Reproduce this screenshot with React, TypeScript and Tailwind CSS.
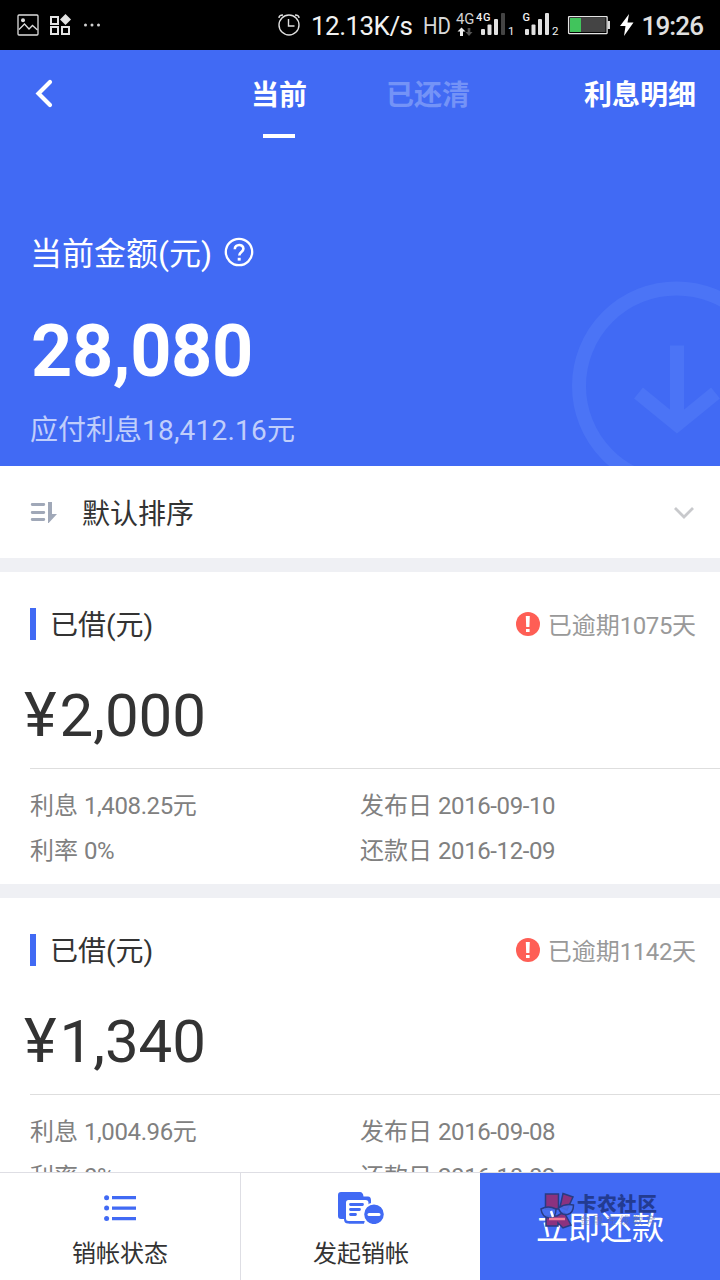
type Loan = {
  amount: string;
  interest: string;
  rate: string;
  published: string;
  due: string;
  overdue: number;
};

const LOANS: Loan[] = [
  { amount: "2,000", interest: "1,408.25", rate: "0%", published: "2016-09-10", due: "2016-12-09", overdue: 1075 },
  { amount: "1,340", interest: "1,004.96", rate: "0%", published: "2016-09-08", due: "2016-10-03", overdue: 1142 },
];

function StatusBar() {
  return (
    <div className="h-[50px] shrink-0 bg-black">
      <svg width="720" height="50" viewBox="0 0 720 50" fill="none">
        {/* gallery */}
        <g stroke="#dedede" strokeWidth="1.3">
          <rect x="18" y="15" width="20" height="20" rx="1" />
          <path d="M19 29.5l5.5-5.5 4.5 5 3.5-3.5 5 4.5" />
        </g>
        <circle cx="23" cy="20.2" r="2" fill="#dedede" />
        {/* apps */}
        <g stroke="#e4e4e4" strokeWidth="2">
          <rect x="51" y="17" width="7" height="7" />
          <rect x="51" y="27" width="7" height="7" />
          <rect x="62" y="27" width="7" height="7" />
        </g>
        <path d="M65.5 14l5.5 5.5-5.5 5.5-5.5-5.5z" fill="#e4e4e4" />
        <g fill="#d0d0d0">
          <circle cx="85.5" cy="25" r="1.5" />
          <circle cx="92" cy="25" r="1.5" />
          <circle cx="98.5" cy="25" r="1.5" />
        </g>
        {/* alarm */}
        <g stroke="#dedede" strokeWidth="1.4">
          <circle cx="289" cy="25" r="10" />
          <path d="M288.5 19v7h6M279 18c0-2 1.500-3 4-3M299 18c0-2-1.500-3-4-3" />
        </g>
        <g className="font-[Roboto]" fill="#f2f2f2">
          <text x="311" y="35" fontSize="26" textLength="102">12.13K/s</text>
          <text x="423" y="34" fontSize="24" textLength="28" lengthAdjust="spacingAndGlyphs" fill="#d8d8d8">HD</text>
          <text x="456" y="24" fontSize="15.5" textLength="18.500" lengthAdjust="spacingAndGlyphs" fill="#d0d0d0">4G</text>
          <text x="476" y="21" fontSize="11" fontWeight="500" textLength="14.500">4G</text>
          <text x="522.5" y="21" fontSize="11" fontWeight="500">G</text>
          <text x="508" y="35" fontSize="11.5">1</text>
          <text x="552" y="35" fontSize="11.5">2</text>
          <text x="641.5" y="35" fontSize="26" fontWeight="500" textLength="62.5" fill="#e0e0e0">19:26</text>
        </g>
        <path d="M461.5 27.500l4 4h-2.500V36h-3v-4.500h-2.500z" fill="#eee" />
        <path d="M469 36l3.500-4h-2.200v-4h-2.600v4h-2.200z" fill="#555" />
        <g fill="#e2e2e2">
          <rect x="481" y="29" width="4" height="6" rx="1" />
          <rect x="487.5" y="24.5" width="4" height="10.5" rx="1" />
          <rect x="494" y="19" width="4" height="16" rx="1" />
          <rect x="525" y="29" width="4" height="6" rx="1" />
          <rect x="531.5" y="24.5" width="4" height="10.5" rx="1" />
          <rect x="538" y="19" width="4" height="16" rx="1" />
          <rect x="545" y="13" width="4" height="22" rx="1" />
        </g>
        <rect x="501" y="13" width="4" height="22" rx="1" fill="#444" />
        {/* battery */}
        <rect x="568.6" y="16.6" width="38.5" height="17" rx="0.5" stroke="#e4e4e4" strokeWidth="1.3" />
        <rect x="570" y="18" width="35.5" height="14" fill="#444" />
        <rect x="570" y="18" width="11" height="14" fill="#41c45c" />
        <rect x="607.5" y="21" width="2.5" height="8" fill="#d8d8d8" />
        <path d="M629 14l-9 12h5.5l-1.500 10 9.500-13.500h-6z" fill="#fff" />
      </svg>
    </div>
  );
}

function Header() {
  return (
    <header className="relative h-[416px] shrink-0 overflow-hidden bg-[#416af4] text-white">
      <svg className="absolute left-[570px] top-[230px]" width="150" height="186" viewBox="570 280 150 186" fill="none" stroke="#4b74f6" strokeWidth="14">
        <circle cx="676.5" cy="386" r="97.5" />
        <path d="M677 345.5v80M638.500 393l38.500 31.500 38.500-31.500" />
      </svg>

      <nav className="flex h-[90px] items-start text-[28px] font-bold leading-[40px]">
        <svg className="ml-[34px] mt-[28px]" width="20" height="32" viewBox="0 0 20 32" fill="none" stroke="#fff" strokeWidth="4.2" strokeLinecap="round">
          <path d="M16 4L4.500 15.500l11.500 11.500" />
        </svg>
        <div className="ml-[196px] mt-[26px] flex w-[58px] flex-col items-center">
          <span className="whitespace-nowrap">当前</span>
          <span className="mt-[18px] h-1 w-8 bg-white" />
        </div>
        <span className="ml-[78px] mt-[26px] text-[#7493f7]">已还清</span>
        <span className="ml-auto mr-6 mt-[26px]">利息明细</span>
      </nav>

      <div className="mt-[90px] flex h-[44px] items-center pl-[30px]">
        <span className="pt-1 text-[32px] leading-[44px]">当前金额(元)</span>
        <svg className="ml-[12px]" width="30" height="30" viewBox="0 0 30 30" fill="none" stroke="#fff" strokeWidth="2.3">
          <circle cx="15" cy="15" r="13.2" />
          <path d="M10.800 12.200c0-5.600 8.600-5.600 8.600-.4 0 3.200-4.100 3.300-4.100 6.700" strokeWidth="2.6" />
          <path d="M15.200 20.800v2.800" strokeWidth="3" />
        </svg>
      </div>
      <p className="mt-[36px] pl-[31px] text-[72px] font-bold leading-[84px] tracking-[-0.4px]">28,080</p>
      <p className="mt-[17px] pl-[30px] text-[28px] leading-[40px] text-[#c0cefb]">
        应付利息<span className="tracking-[0.2px]">18,412.16</span>元
      </p>
    </header>
  );
}

function SortRow() {
  return (
    <div className="flex h-[92px] shrink-0 items-center bg-white pl-[30px] pr-[26px]">
      <svg width="28" height="24" viewBox="0 0 28 24">
        <path d="M2.200 4.500h11.600M2.200 12.500h11.600M2.200 19.500h11.600" stroke="#a0a8b8" strokeWidth="2.8" strokeLinecap="round" />
        <path d="M18 2h4v12h5l-8.300 9h-.7z" fill="#a0a8b8" />
      </svg>
      <span className="ml-6 pt-[5px] text-[28px] leading-[40px]">默认排序</span>
      <svg className="ml-auto mt-0.5" width="20" height="14" viewBox="0 0 20 14" fill="none" stroke="#c8c9cc" strokeWidth="2.8">
        <path d="M1 2l9 9 9-9" />
      </svg>
    </div>
  );
}

function Num({ children }: { children: string | number }) {
  return <span className="tracking-[-0.4px]">{children}</span>;
}

function LoanCard({ loan }: { loan: Loan }) {
  return (
    <section className="mt-[14px] h-[312px] shrink-0 bg-white">
      <div className="flex h-[104px] items-center pl-[30px] pr-6">
        <span className="h-8 w-1.5 bg-[#416af4]" />
        <span className="ml-[14px] pt-1 text-[28px] leading-[40px]">已借(元)</span>
        <svg className="ml-auto" width="24" height="24" viewBox="0 0 24 24">
          <circle cx="12" cy="12" r="12" fill="#fe5e55" />
          <path d="M9.800 4h4l-.4 11h-3.200zM10 17h3.600v3H10z" fill="#fff" />
        </svg>
        <span className="ml-2 pt-1 text-[24px] leading-[36px] text-[#999]">
          已逾期<Num>{loan.overdue}</Num>天
        </span>
      </div>
      <p className="h-[92px] pl-[24px] text-[60px] leading-[80px]">
        <span className="mr-[3px] text-[62px] leading-none">¥</span>
        <span className="tracking-[-0.1px]">{loan.amount}</span>
      </p>
      <div className="ml-[30px] grid grid-cols-[330px_1fr] border-t border-[#dedede] pt-[15px] text-[24px] leading-[45px] text-[#808080]">
        <span>利息 <Num>{loan.interest}</Num>元</span>
        <span>发布日 <Num>{loan.published}</Num></span>
        <span>利率 <Num>{loan.rate}</Num></span>
        <span>还款日 <Num>{loan.due}</Num></span>
      </div>
    </section>
  );
}

function Watermark() {
  return (
    <svg className="absolute left-[60px] top-[17px]" width="120" height="52" viewBox="540 1190 120 52">
      <g fill="#8b327f" stroke="#283b83" strokeWidth="1.5">
        <path d="M545.500 1194h13v15h-13zM563 1193.500l10 3.500-6 13-7-3zM546 1216h11l7-4 7 13-8 3-5-5v3h-12z" />
      </g>
      <g fill="#4a70ef" fillOpacity="0.85" stroke="#283b83" strokeWidth="1.5">
        <path d="M541 1209q7-4 15 0 0 9-7 9-7-1-8-9zM558.500 1208q7-5 15-3 0 8-6 9.500-7 1-9-6.500z" />
      </g>
      <path d="M549 1219h16" stroke="#ef7c99" strokeWidth="2.5" />
      <path d="M551 1211l2 6" stroke="#fff" strokeWidth="2.400" />
      <text x="577" y="1211" fontSize="19.5" fontWeight="900" textLength="80" fill="#233b91">卡农社区</text>
      <text x="580" y="1224" fontSize="10" textLength="76" fill="#6875a3" fillOpacity="0.6">金融在线教育</text>
    </svg>
  );
}

function BottomBar() {
  return (
    <footer className="flex h-[108px] shrink-0 border-t border-[#dedee4] bg-white text-[24px] leading-[36px]">
      <div className="flex w-[240px] flex-col items-center pt-[22px]">
        <svg width="32" height="26" viewBox="0 0 32 26" fill="#416af4">
          <circle cx="2.6" cy="2.8" r="2.5" />
          <circle cx="2.6" cy="13" r="2.5" />
          <circle cx="2.6" cy="23.5" r="2.5" />
          <path d="M8 1h24v3.300H8zM8 11.500h24v3.300H8zM8 22h24v3.300H8z" />
        </svg>
        <span className="mt-[15px]">销帐状态</span>
      </div>
      <div className="flex w-[240px] flex-col items-center border-l border-[#dedee4] pt-[19px]">
        <svg width="46" height="32" viewBox="0 0 46 32">
          <path d="M3 0h19q3 0 3.500 4.500H30q3 0 3 4V12L26 31.500H10q-4 0-4-4.500H3q-3 0-3-3V3q0-3 3-3z" fill="#416af4" />
          <path d="M10.500 8h17q3 0 3 3v18h-20q-2.500 0-2.500-2.500v-16Q8 8 10.500 8z" fill="#fff" />
          <path d="M9 29.500h17v2H11z" fill="#416af4" />
          <path d="M12.500 12.500h12M12.500 17.500h9M12.500 22.500h5" stroke="#416af4" strokeWidth="2.8" strokeLinecap="round" />
          <circle cx="36" cy="22.3" r="10.7" fill="#416af4" stroke="#fff" strokeWidth="1.8" />
          <path d="M31 22.500h10" stroke="#fff" strokeWidth="3" strokeLinecap="round" />
        </svg>
        <span className="mt-[12px] pl-px">发起销帐</span>
      </div>
      <div className="relative flex flex-1 justify-center bg-[#416af4] pt-[31px] text-[32px] leading-[48px] text-white">
        立即还款
        <Watermark />
      </div>
    </footer>
  );
}

export default function App() {
  return (
    <div className="flex h-[1280px] w-[720px] flex-col overflow-hidden bg-[#eff0f4] font-[Roboto,'Noto_Sans_CJK_SC',sans-serif] text-[#333]">
      <StatusBar />
      <Header />
      <SortRow />
      <main className="flex min-h-0 flex-1 flex-col overflow-hidden">
        {LOANS.map((loan) => (
          <LoanCard key={loan.published} loan={loan} />
        ))}
      </main>
      <BottomBar />
    </div>
  );
}
